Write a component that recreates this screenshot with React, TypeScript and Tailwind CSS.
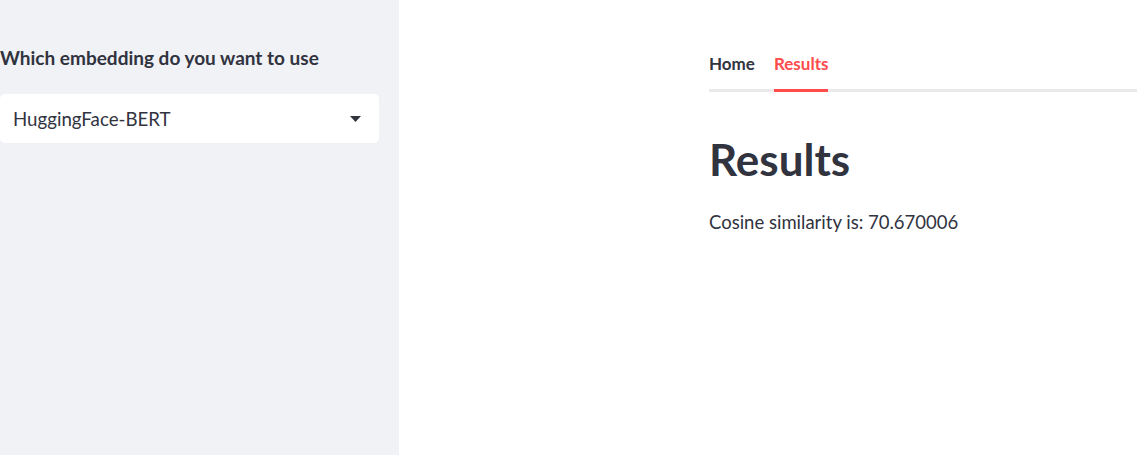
import { useState } from 'react';

const TABS = ['Home', 'Results'];

export default function App() {
  const [tab, setTab] = useState('Results');

  return (
    <div className="flex h-[455px] w-[1137px] overflow-hidden bg-white font-['Lato',sans-serif] text-[#31333f]">
      {/* Sidebar */}
      <aside className="w-[399px] shrink-0 bg-[#f0f2f6] pr-5 pt-[44px]">
        <label className="block text-[19px] font-bold leading-[27px]">
          Which embedding do you want to use
        </label>
        <div className="mt-[23px] flex h-[49px] items-center justify-between rounded-[5px] bg-white pl-[13px] pr-[18px]">
          <span className="pt-[1px] text-[18.7px]">HuggingFace-BERT</span>
          <svg width="11" height="6" viewBox="0 0 11 6" className="fill-[#31333f]">
            <path d="M0 0h11L5.5 6z" />
          </svg>
        </div>
      </aside>

      {/* Main */}
      <main className="flex-1 pl-[310px] pt-[50px]">
        <div className="flex gap-[19px] border-b-[3px] border-[#eaeaec]">
          {TABS.map((t) => {
            const active = t === tab;
            return (
              <button
                key={t}
                type="button"
                onClick={() => setTab(t)}
                className={
                  'relative -mb-[3px] border-b-[3px] pt-[1px] pb-[13px] text-[17px] font-bold leading-[25px] ' +
                  (active ? 'border-[#ff4b4b] text-[#ff4b4b]' : 'border-transparent text-[#31333f]')
                }
              >
                {t}
              </button>
            );
          })}
        </div>
        <h1 className="mt-[37px] text-[44px] font-bold leading-[60px]">Results</h1>
        <p className="mt-[20px] text-[18.5px] leading-[26px]">Cosine similarity is: 70.670006</p>
      </main>
    </div>
  );
}
